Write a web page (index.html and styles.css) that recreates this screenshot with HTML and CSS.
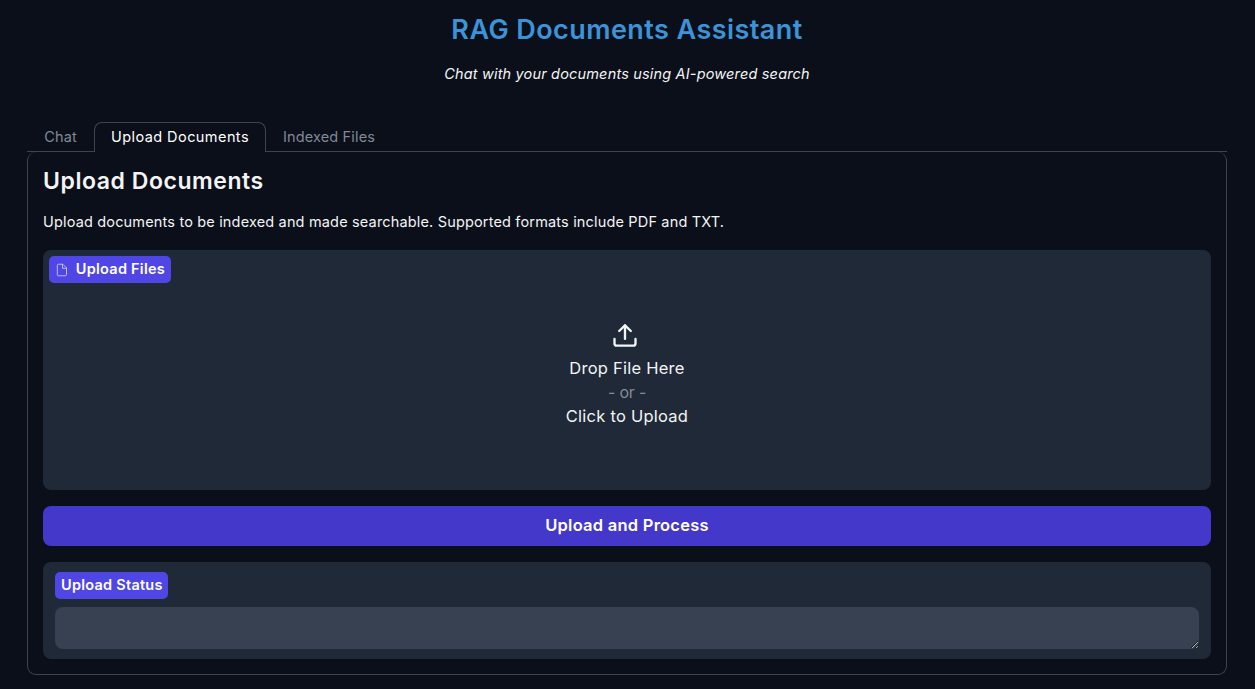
FILE: index.html
```html
<!DOCTYPE html>
<html lang="en">
<head>
<meta charset="utf-8">
<title>RAG Documents Assistant</title>
<link rel="stylesheet" href="styles.css">
</head>
<body>
<main class="app">
  <header class="header">
    <h1 class="title"><span>RAG Documents Assistant</span></h1>
    <p class="subtitle"><span>Chat with your documents using AI-powered search</span></p>
  </header>
  <nav class="tabs">
    <button class="tab tab-chat">Chat</button>
    <button class="tab tab-upload selected">Upload Documents</button>
    <button class="tab tab-files">Indexed Files</button>
    <span class="tabs-rest"></span>
  </nav>
  <section class="panel">
    <h2 class="heading">Upload Documents</h2>
    <p class="intro">Upload documents to be indexed and made searchable. Supported formats include PDF and TXT.</p>
    <div class="dropzone">
      <div class="badge badge-files">
        <svg width="14" height="14" viewBox="0 0 24 24" fill="none" stroke="currentColor" stroke-width="1.6" stroke-linecap="round" stroke-linejoin="round"><path d="M13 2H6a2 2 0 0 0-2 2v16a2 2 0 0 0 2 2h12a2 2 0 0 0 2-2V9z"/><path d="M13 2v7h7"/></svg>
        <span>Upload Files</span>
      </div>
      <div class="drop-text">
        <svg class="upload-icon" width="28" height="27" viewBox="0 0 24 24" preserveAspectRatio="none" fill="none" stroke="currentColor" stroke-width="2" stroke-linecap="round" stroke-linejoin="round"><path d="M21 15v4a2 2 0 0 1-2 2H5a2 2 0 0 1-2-2v-4"/><path d="M17 8l-5-5-5 5"/><path d="M12 3v12"/></svg>
        <span class="drop-here">Drop File Here</span>
        <span class="or">- or -</span>
        <span class="click">Click to Upload</span>
      </div>
    </div>
    <button class="primary">Upload and Process</button>
    <div class="status">
      <label class="badge badge-status" for="status"><span>Upload Status</span></label>
      <textarea id="status" class="output"></textarea>
    </div>
  </section>
</main>
</body>
</html>
```
FILE: styles.css
```css
* { box-sizing: border-box; margin: 0; }
body {
  background: #0b0f19;
  color: #f3f4f6;
  font-family: Inter, "Open Sans", sans-serif;
  overflow: hidden;
}
button { font: inherit; border: 0; background: none; }
.app { width: 1200px; margin-left: 27px; }
.header { height: 122px; text-align: center; }
.title {
  padding-top: 10px;
  line-height: 40px;
  font-size: 27px;
  font-weight: 600;
  color: #3b94d9;
  letter-spacing: 0.43px;
}
.subtitle {
  margin-top: 13px;
  line-height: 22px;
  font-size: 14.5px;
  font-style: italic;
  letter-spacing: 0.17px;
}
.tabs { display: flex; height: 30px; white-space: nowrap; }
.tab {
  padding: 0;
  border-bottom: 1px solid #3f434e;
  color: #818997;
  font-size: 14.5px;
  line-height: 29px;
  letter-spacing: 0.15px;
}
.tab-chat { width: 67px; }
.tab-upload { width: 172px; letter-spacing: 0.43px; }
.tab-files { width: 126px; }
.tab.selected {
  padding-bottom: 2px;
  border: 1px solid #3f434e;
  border-bottom: 0;
  border-radius: 8px 8px 0 0;
  line-height: 27px;
  color: #fff;
}
.tabs-rest { flex: 1; border-bottom: 1px solid #3f434e; }
.panel {
  height: 523px;
  padding: 14px 15px 15px;
  border: 1px solid #3f434e;
  border-top: 0;
  border-radius: 9px;
}
.heading {
  line-height: 30px;
  font-size: 23px;
  font-weight: 600;
  letter-spacing: 0.55px;
}
.intro {
  margin-top: 15px;
  line-height: 22px;
  font-size: 14.5px;
  letter-spacing: 0.165px;
  white-space: nowrap;
}
.dropzone {
  height: 240px;
  margin-top: 17px;
  padding: 6px;
  border-radius: 8px;
  background: #1f2937;
}
.badge {
  display: flex;
  align-items: center;
  height: 27px;
  padding: 0 6px;
  border-radius: 5px;
  background: #4f46e5;
  color: #fff;
  font-size: 14.5px;
  font-weight: 600;
  line-height: 17px;
  letter-spacing: 0.25px;
  white-space: nowrap;
}
.badge span { padding-bottom: 2px; }
.badge svg { margin-right: 7px; color: #c7c5f7; }
.badge-files { width: 122px; }
.badge-status { width: 113px; }
.drop-text {
  display: flex;
  flex-direction: column;
  align-items: center;
  margin-top: 39px;
  font-size: 16.5px;
  line-height: 24px;
  letter-spacing: 0.24px;
}
.upload-icon { margin: 0 4px 7px 0; }
.or { color: #848b98; font-size: 16px; letter-spacing: -0.2px; }
.primary {
  display: block;
  width: 100%;
  height: 40px;
  margin-top: 16px;
  padding: 0 0 2px;
  border-radius: 8px;
  background: #4338ca;
  color: #fff;
  font-size: 16.5px;
  font-weight: 600;
  letter-spacing: 0.24px;
}
.status {
  height: 97px;
  margin-top: 16px;
  padding: 10px 12px;
  border-radius: 8px;
  background: #1f2937;
}
.output {
  display: block;
  width: 100%;
  height: 42px;
  margin-top: 8px;
  border: 0;
  border-radius: 8px;
  background: #374151;
  color: #fff;
  resize: vertical;
}
```
